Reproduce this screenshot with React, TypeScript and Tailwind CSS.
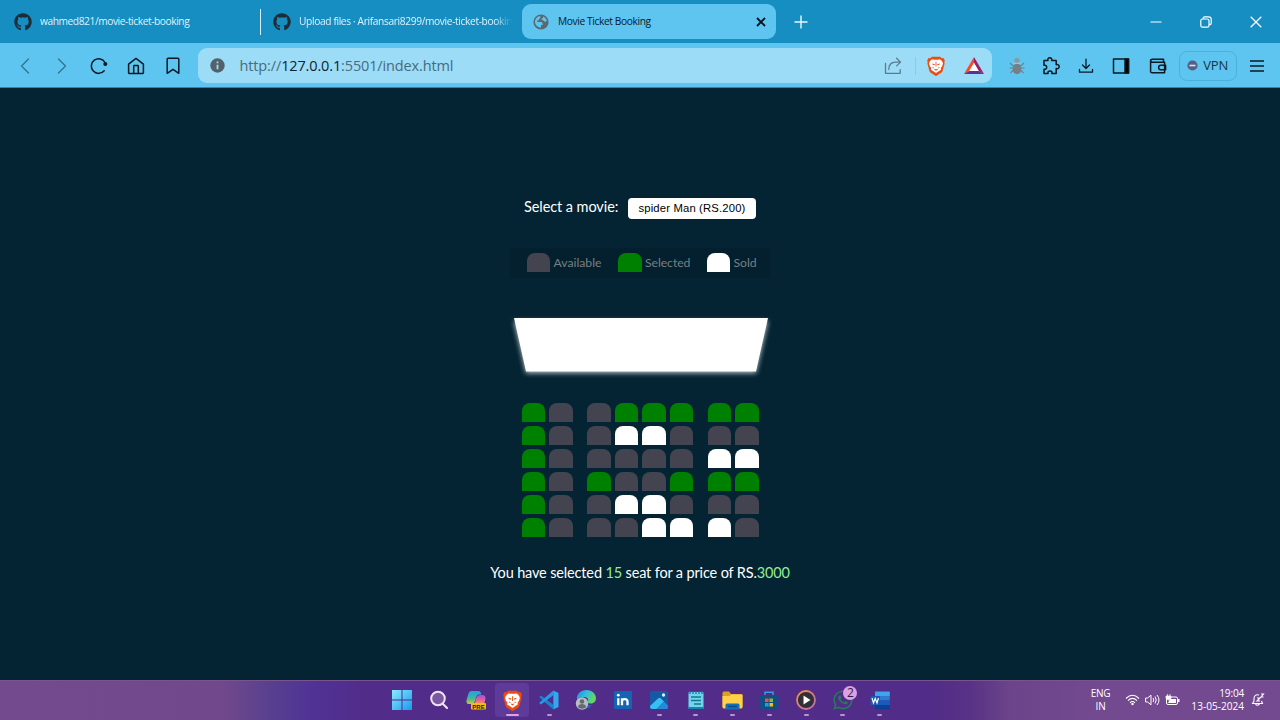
import React from "react";
import { FaGithub, FaWhatsapp } from "react-icons/fa";

type Seat = "a" | "s" | "x";

const seatColors: Record<Seat, string> = {
  a: "bg-[#444451]",
  s: "bg-[#008000]",
  x: "bg-white",
};

const rows = ["sa asss ss", "sa axxa aa", "sa aaaa xx", "sa saas ss", "sa axxa aa", "sa aaxx xa"];

function SeatBlock({ seats }: { seats: string }) {
  return (
    <div className="flex gap-[4px]">
      {seats.split("").map((s, i) => (
        <div key={i} className={`h-[19px] w-[23.5px] rounded-t-[8px] ${seatColors[s as Seat]}`} />
      ))}
    </div>
  );
}

function Brave({ size }: { size: number }) {
  return (
    <svg width={size} height={size} viewBox="0 0 24 24">
      <path d="M7 .8h10l1.800 1.800 2.200-.2 1.600 3-.7 2 .5 1.300-2.500 9.300c-.3 1-.8 1.600-1.600 2.200L12.800 23.800q-.8.500-1.600 0L5.700 20.200c-.8-.6-1.300-1.200-1.600-2.200L1.600 8.700l.5-1.300-.7-2 1.600-3 2.200.2z" fill="#ee4c12" />
      <path d="M7.500 3.900l2.500.5h4l2.500-.5 2 1.600 1.200 1.500.7 2-.9 3-1.700 2.500.3 2-2.400 1.400L12 20.500l-3.700-2.600-2.400-1.400.3-2L4.500 12l-.9-3 .7-2 1.200-1.500z" fill="#fff" />
      <path d="M7 8.900l3.600.9-.2 1.300-2.200-.5zM17 8.900l-3.600.9.2 1.300 2.200-.5zM11.500 7h1v5.500h-1zM9.700 15.400l2.300.6 2.300-.6-.8 1.300-1.500.9-1.500-.9zM7.800 13.200l2 .8-.4.8-1.400-.5zM16.200 13.200l-2 .8.4.8 1.400-.5z" fill="#ee4c12" />
    </svg>
  );
}

function TabBar() {
  return (
    <header className="flex h-[43px] items-center bg-[#168ec2] font-['Open_Sans',sans-serif] text-[10.2px] tracking-[-0.420px] text-[#dff3fc]">
      <div className="ml-[14px] flex w-[246px] items-center">
        <FaGithub size={18} color="#1d2d38" />
        <span className="ml-[8px] whitespace-nowrap">wahmed821/movie-ticket-booking</span>
      </div>
      <div className="h-[26px] w-px bg-[#d4effb]" />
      <div className="ml-[12px] flex w-[238px] items-center">
        <FaGithub size={18} color="#1d2d38" className="shrink-0" />
        <span className="ml-[8px] whitespace-nowrap tracking-[-0.360px] [mask-image:linear-gradient(to_right,black_92%,transparent)]">
          Upload files · Arifansari8299/movie-ticket-bookin
        </span>
      </div>
      <div className="ml-[11px] flex h-[35px] w-[254px] items-center rounded-[9px] bg-[#5ec4f0] pl-[11px] pr-[9px] text-[#06202d]">
        <svg width="16" height="16" viewBox="0 0 16 16">
          <circle cx="8" cy="8" r="7.600" fill="#5b686f" />
          <path d="M2 7.200C2.300 4.500 4.500 2.300 7.300 2v1.400c0 .9-.7 1.500-1.500 1.500v1.600H4.300v1.600h3.800c.8 0 1.500.7 1.500 1.500v1.500H8v2.500C5 13.700 2.500 11.500 2 8.600zM10 2.400c1.900.7 3.400 2.300 3.900 4.400-.8 1-2.100 1.300-2.900.5L9.800 6.100H8.600V4.700c.8 0 1.400-.6 1.400-1.400z" fill="#5ec4f0" />
        </svg>
        <span className="ml-[9px] tracking-[-0.380px]">Movie Ticket Booking</span>
        <svg className="ml-auto" width="12" height="12" viewBox="0 0 12 12">
          <path d="M2 2l8 8M10 2l-8 8" stroke="#03151e" strokeWidth="1.900" />
        </svg>
      </div>
      <svg className="ml-[18px]" width="14" height="14" viewBox="0 0 14 14">
        <path d="M7 .5v13M.5 7h13" stroke="#e9f8ff" strokeWidth="1.400" />
      </svg>
      <div className="ml-auto mr-[18px] flex items-center gap-[38px]">
        <svg width="12" height="12" viewBox="0 0 12 12"><path d="M.5 6h11" stroke="#fff" /></svg>
        <svg width="12" height="12" viewBox="0 0 12 12" fill="none" stroke="#fff" strokeWidth="1.200">
          <rect x=".8" y="3" width="8.200" height="8.200" rx="1.800" />
          <path d="M3.200 3V2c.1-.7.6-1.200 1.300-1.200h4.200c1.500 0 2.500 1 2.500 2.500v3.900c0 .8-.6 1.400-1.300 1.500H9" />
        </svg>
        <svg width="12" height="12" viewBox="0 0 12 12"><path d="M.7.7l10.600 10.600M11.300.7L.7 11.300" stroke="#fff" strokeWidth="1.300" /></svg>
      </div>
    </header>
  );
}

const line = { fill: "none", stroke: "#0a1a22", strokeWidth: 1.5, strokeLinecap: "round", strokeLinejoin: "round" } as const;

function Toolbar() {
  return (
    <div className="flex h-[45px] items-center border-b border-[#2f86ad] bg-[#5ec4f0] pt-px font-['Open_Sans',sans-serif]">
      <div className="ml-[16px] flex items-center gap-[18.900px]">
        <svg width="18" height="18" viewBox="0 0 18 18" {...line} stroke="#35748f" strokeWidth="1.300"><path d="M12.500 2L5.500 9l7 7" /></svg>
        <svg width="18" height="18" viewBox="0 0 18 18" {...line} stroke="#35748f" strokeWidth="1.300"><path d="M5.500 2l7 7-7 7" /></svg>
        <svg width="18" height="18" viewBox="0 0 18 18" {...line}>
          <path d="M14.200 13.800A7.300 7.300 0 1 1 15 5.500" /><circle cx="15.300" cy="7" r="2" fill="#0a1a22" stroke="none" />
        </svg>
        <svg width="18" height="18" viewBox="0 0 18 18" {...line}>
          <path d="M1.600 7.200L9 1.400l7.400 5.800v8.600c0 .4-.2.600-.6.600H2.200c-.4 0-.6-.2-.6-.6z" /><path d="M6.700 16V9.200c0-.4.2-.6.6-.6h3.400c.4 0 .6.200.6.600V16" />
        </svg>
        <svg width="18" height="18" viewBox="0 0 18 18" {...line}><path d="M3.200 2.200c0-.6.300-.9.900-.9h9.800c.6 0 .9.300.9.900v14.100L9 12.300l-5.800 4z" /></svg>
      </div>
      <div className="ml-[16px] flex h-[35px] w-[794.500px] items-center rounded-[9px] bg-[#9ddcf7] pl-[12px]">
        <svg width="15" height="15" viewBox="0 0 15 15"><circle cx="7.500" cy="7.500" r="7.200" fill="#54616b" /><path d="M7.500 6.700v4.600M7.500 3.500v1.700" stroke="#9ddcf7" strokeWidth="1.800" /></svg>
        <span className="ml-[15px] text-[14.500px] tracking-[-0.140px] text-[#466b7d]">http://<span className="text-[#10242e]">127.0.0.1</span>:5501/index.html</span>
        <svg className="ml-auto" width="18" height="18" viewBox="0 0 18 18" {...line} stroke="#587d8e" strokeWidth="1.300">
          <path d="M1.500 6.500v9.800h14.700v-3.600M4.800 12.600c0-4.500 2.500-7.500 6.800-7.500h4.800M12.600 1.300l3.900 3.800-3.900 3.800" />
        </svg>
        <div className="ml-[13px] h-[18px] w-px bg-[#8dcbe5]" />
        <div className="ml-[10px]"><Brave size={20} /></div>
        <svg className="ml-[18px] mr-[8.500px]" width="20" height="18" viewBox="0 0 20 18">
          <path d="M10 0L0 17l5.500-3L10 6z" fill="#ff4724" /><path d="M10 0l10 17-5.500-3L10 6z" fill="#9e1f63" /><path d="M0 17h20l-5.500-3h-9z" fill="#5a3294" /><path d="M10 5.700L5.200 14h9.600z" fill="#fff" />
        </svg>
      </div>
      <div className="ml-[16.600px] flex items-center">
        <svg width="16" height="18" viewBox="0 0 16 18">
          <path d="M1 6l2.500 2.500h9L15 6M.5 11h15M1.500 16l3-3M14.500 16l-3-3" fill="none" stroke="#6f818a" strokeWidth="1.100" />
          <ellipse cx="8" cy="11.800" rx="4.400" ry="5.400" fill="#747f86" /><rect x="5.300" y="1" width="5.400" height="4.800" rx="2" fill="#8b999f" /><path d="M4.500 6.300h7" stroke="#b4c1c7" />
        </svg>
        <svg className="ml-[17.600px]" width="18" height="18" viewBox="0 0 18 18" {...line}>
          <path d="M2 3.600h4c-.7-1.600.3-2.900 1.800-2.900s2.500 1.300 1.800 2.900h4.600v4.100c1.600-.7 3 .3 3 1.900s-1.400 2.500-3 1.800v5H9.800c.6-1.500-.5-2.500-1.800-2.500s-2.500 1-1.900 2.500H2v-4.200c1.700.5 2.700-.5 2.700-1.900S3.700 7.800 2 8.300z" />
        </svg>
        <svg className="ml-[18px]" width="16" height="16" viewBox="0 0 16 16" {...line} strokeWidth="1.300"><path d="M8 1.200v9M4.500 7L8 10.500 11.500 7M1.500 11.500v2.700h13v-2.700" /></svg>
        <svg className="ml-[18px]" width="18" height="18" viewBox="0 0 18 18" {...line}><rect x="1.500" y="2" width="15" height="14" /><path d="M13 2h3.500v14H13z" fill="#000" /></svg>
        <svg className="ml-[19px]" width="18" height="18" viewBox="0 0 18 18" {...line}>
          <path d="M14.500 5V2.200H3.600c-1.300 0-2 .6-2 1.500s.7 1.600 2 1.600h12v10.500H3c-.9 0-1.400-.5-1.400-1.400V3.900M16.600 8.200h-4.800c-2.900 0-2.900 4.600 0 4.600h4.800z" />
        </svg>
        <div className="ml-[12px] flex h-[30px] w-[58px] items-center rounded-[8px] border border-[#4ab0dc] pl-[7px]">
          <svg width="11" height="11" viewBox="0 0 11 11"><circle cx="5.500" cy="5.500" r="5.100" fill="#575f85" /><path d="M2.500 5.500h6" stroke="#d7e6ef" strokeWidth="1.600" /></svg>
          <span className="ml-[5px] text-[13px] tracking-[-0.200px] text-[#173645]">VPN</span>
        </div>
        <svg className="ml-[12px]" width="16" height="14" viewBox="0 0 16 14"><path d="M1 2h14M1 7h14M1 12h14" stroke="#0a1a22" strokeWidth="1.500" /></svg>
      </div>
    </div>
  );
}

function Page() {
  return (
    <main className="flex h-[592px] flex-col items-center bg-[#042433] pt-[110px] font-[Lato,sans-serif] text-white">
      <div className="flex h-[21px] w-[232px] items-center justify-between">
        <label className="whitespace-nowrap pb-[2px] text-[14.500px] leading-none tracking-[-0.080px]">Select a movie:</label>
        <div className="flex h-[21px] w-[128px] items-center justify-center rounded-[4px] bg-white font-['Liberation_Sans',sans-serif] text-[11.300px] tracking-[0.150px] text-black">
          spider Man (RS.200)
        </div>
      </div>
      <ul className="mt-[29px] flex h-[30px] w-[260px] items-center bg-[#04202e] pb-px pl-[17px] text-[12.200px] text-[#777f83]">
        <li className="flex w-[91px] items-center gap-[3.500px]"><div className="h-[19px] w-[23px] rounded-t-[8px] bg-[#444451]" /><span className="pt-px leading-[18px]">Available</span></li>
        <li className="flex w-[89px] items-center gap-[3px]"><div className="h-[19px] w-[24px] rounded-t-[8px] bg-[#008000]" /><span className="pt-px leading-[18px] tracking-[-0.050px]">Selected</span></li>
        <li className="flex items-center gap-[3.500px]"><div className="h-[19px] w-[23px] rounded-t-[8px] bg-white" /><span className="pt-px leading-[18px]">Sold</span></li>
      </ul>
      <svg className="mt-[30px]" width="280" height="74" viewBox="0 0 280 74">
        <defs><filter id="glow" x="-10%" y="-30%" width="120%" height="160%"><feGaussianBlur stdDeviation="2.400" /></filter></defs>
        <path d="M14 13h254l-12 52H26z" fill="#fff" opacity=".75" filter="url(#glow)" />
        <path d="M14 10h254l-12 53.500H26z" fill="#fff" />
      </svg>
      <div className="mt-[21px] flex w-[237px] flex-col gap-[4px]">
        {rows.map((row, i) => (
          <div key={i} className="flex justify-between">
            {row.split(" ").map((block, j) => <SeatBlock key={j} seats={block} />)}
          </div>
        ))}
      </div>
      <p className="mt-[26px] whitespace-nowrap text-[14.500px] leading-[20px] tracking-[-0.150px]">
        You have selected <span className="text-[#90ee90]">15</span> seat for a price of RS.<span className="text-[#90ee90]">3000</span>
      </p>
    </main>
  );
}

function AppIcon({ children, active, dot = true }: { children: React.ReactNode; active?: boolean; dot?: boolean }) {
  return (
    <div className={`relative flex h-[34px] w-[34px] items-center justify-center rounded-[4px] ${active ? "bg-[#5f3b99]" : ""}`}>
      {children}
      {dot && <i className={`absolute bottom-[1px] h-[2.500px] rounded-full ${active ? "w-[13px] bg-[#df9ee7]" : "w-[5px] bg-[#b597ce]"}`} />}
    </div>
  );
}

function Taskbar() {
  return (
    <footer className="flex h-[40px] items-center border-t border-[#765591] bg-[linear-gradient(to_right,#734a8d_0,#70488b_225px,#58408f_270px,#503395_310px,#512c88_370px,#512c88_930px,#583286_970px,#6b448a_1010px,#734a8f_1100px)] pb-px font-['Open_Sans',sans-serif] text-white">
      <div className="ml-[385.200px] flex gap-[2.720px]">
        <AppIcon dot={false}><svg width="20" height="20" viewBox="0 0 20 20"><defs><linearGradient id="win" x2="1" y2="1"><stop stopColor="#8ceaff" /><stop offset="1" stopColor="#169bed" /></linearGradient></defs><path d="M0 0h9.500v9.500H0zM10.500 0H20v9.500h-9.500zM0 10.500h9.500V20H0zM10.500 10.500H20V20h-9.500z" fill="url(#win)" /></svg></AppIcon>
        <AppIcon dot={false}><svg width="20" height="20" viewBox="0 0 20 20"><circle cx="9" cy="8.500" r="6.800" fill="#79589f" stroke="#eee2f4" strokeWidth="2" /><path d="M14 14l4 4" stroke="#eee2f4" strokeWidth="2.200" strokeLinecap="round" /></svg></AppIcon>
        <AppIcon dot={false}>
          <svg width="20" height="20" viewBox="0 0 20 20">
            <defs><linearGradient id="cpl" x2="0" y2="1"><stop stopColor="#269ee6" /><stop offset=".6" stopColor="#41b996" /><stop offset="1" stopColor="#dbc827" /></linearGradient><linearGradient id="cpr" x2="0" y2="1"><stop stopColor="#9854dd" /><stop offset=".5" stopColor="#e65d98" /><stop offset="1" stopColor="#f29b57" /></linearGradient></defs>
            <path d="M5.500 1h7c2 0 2.300 1.500 2.800 3.500H13c-2 0-2.500 2-3.300 4.500-.9 3-1.700 5-3.700 5H3c-2.300 0-3-2-2.300-4.500l1.800-6C3 2 3.800 1 5.500 1z" fill="url(#cpl)" /><path d="M14 5h2c3 0 4 2 3.300 4.500L18 14h-8c-1.500 0-1-1.500-.5-3 .8-3 1.500-6 4.500-6z" fill="url(#cpr)" />
            <rect x="5" y="13" width="15" height="6.500" rx="1" fill="#f7ba19" /><text x="6.200" y="18.600" fontSize="6" letterSpacing=".1" fontWeight="900" fontFamily="Liberation Sans" fill="#2b1c08">PRE</text>
          </svg>
        </AppIcon>
        <AppIcon active><Brave size={21} /></AppIcon>
        <AppIcon>
          <svg width="20" height="20" viewBox="0 0 20 20">
            <path d="M14.300.6L19.500 3v14l-5.200 2.500z" fill="#36a7ee" />
            <path d="M.4 6.800L2 5.400l12.300 9.400v4.700L.5 7.600z" fill="#1684cb" />
            <path d="M.4 13.200L2 14.600 14.300 5.200V.6L.5 12.400z" fill="#239be4" />
          </svg>
        </AppIcon>
        <AppIcon dot={false}>
          <svg width="22" height="20" viewBox="0 0 22 20"><defs><linearGradient id="edge" x2="1" y2=".4"><stop stopColor="#248bdc" /><stop offset=".55" stopColor="#37c0d8" /><stop offset="1" stopColor="#65d65c" /></linearGradient></defs>
            <path d="M2 10C1 4 6 0 11.500 0 17 0 21 4 21 8.500c0 3-2.500 5-5.500 5-2 0-3-.7-2.500-2 .8-2.500-1-4.500-4-4.500C6 7 3 8 2 10z" fill="url(#edge)" /><path d="M2 10c1-3 6-4 9-1 0 5 2 7 6 6-2 4-8 5-12 2C2 15 1 13 2 10z" fill="#1767ba" />
            <circle cx="7" cy="13.500" r="6.200" fill="#b8bdc2" /><circle cx="7" cy="11.500" r="2.300" fill="#646a73" /><path d="M3 17c0-4 8-4 8 0-2 2.300-6 2.300-8 0z" fill="#646a73" />
          </svg>
        </AppIcon>
        <AppIcon dot={false}><svg width="18" height="18" viewBox="0 0 18 18"><rect width="18" height="18" rx="1" fill="#1464b4" /><path d="M4.300 7.200v7M8 14.200v-7M8 10c.2-2.200 5.500-3 5.500.5v3.700" fill="none" stroke="#fff" strokeWidth="2.300" /><circle cx="4.300" cy="4.200" r="1.400" fill="#fff" /></svg></AppIcon>
        <AppIcon><svg width="18" height="18" viewBox="0 0 18 18"><rect width="18" height="18" rx="2" fill="#1558a4" /><path d="M0 15L8 7.500c1-1 2-1 3 0l3 3L6.500 18H2c-1.500 0-2-1-2-3z" fill="#38bff2" /><path d="M14 10.500l4 4.300V16c0 1.500-.5 2-2 2H6.500z" fill="#258ad7" /><circle cx="13.500" cy="4" r="1.700" fill="#d8edff" /></svg></AppIcon>
        <AppIcon><svg width="16" height="20" viewBox="0 0 16 20"><rect x=".5" y="2" width="15" height="17" rx="1" fill="#70d4ed" /><path d="M.5 17h15v2H.5z" fill="#1585aa" /><path d="M2 1v3M5 1v3M8 1v3M11 1v3M14 1v3" stroke="#197e9f" strokeWidth="1.300" /><path d="M3 7h10M3 10.500h10M6 14h7" stroke="#187590" strokeWidth="1.300" /></svg></AppIcon>
        <AppIcon><svg width="21" height="19" viewBox="0 0 21 19"><path d="M.5 2q0-1.500 1.500-1.500h5L9 3h10q1.500 0 1.500 1.500V16H.5z" fill="#dca21c" /><path d="M.5 5h7L9 3.500h11.500V16q0 1.500-1.500 1.500H2Q.5 17.500.5 16z" fill="#ffd04b" /><path d="M3.500 18.500V14q0-1.500 1.500-1.500h11q1.500 0 1.500 1.500v4.500z" fill="#176eb8" /><path d="M6 15.500h9" stroke="#0b4e89" strokeWidth="1.500" /></svg></AppIcon>
        <AppIcon><svg width="20" height="19" viewBox="0 0 20 19"><path d="M6 5V1.300h8V5" fill="none" stroke="#389cdd" strokeWidth="1.500" /><path d="M.5 4h19v12q0 2.500-2.500 2.500H3Q.5 18.500.5 16z" fill="#134d84" /><path d="M6 7.500h3.600V11H6z" fill="#f35325" /><path d="M10.500 7.500H14V11h-3.500z" fill="#81bc35" /><path d="M6 12h3.600v3.500H6z" fill="#12a4e9" /><path d="M10.500 12H14v3.500h-3.500z" fill="#ffba08" /></svg></AppIcon>
        <AppIcon><svg width="20" height="20" viewBox="0 0 20 20"><defs><linearGradient id="media" x2="1" y2="1"><stop stopColor="#f6923e" /><stop offset="1" stopColor="#b66dbb" /></linearGradient></defs><circle cx="10" cy="10" r="9" fill="#303039" stroke="url(#media)" strokeWidth="1.800" /><path d="M7.500 5.500v9l7-4.500z" fill="#fff" /></svg></AppIcon>
        <AppIcon><FaWhatsapp size={22} color="#237b57" /><span className="absolute left-[17.500px] top-[3px] flex h-[14px] w-[14px] items-center justify-center rounded-full bg-[#dda0e5] text-[12px] text-[#32203f]">2</span></AppIcon>
        <AppIcon><svg width="20" height="19" viewBox="0 0 20 19"><path d="M5 .5h14q.8 0 .8.800V5H5z" fill="#41a5ee" /><path d="M5 5h14.800v4.500H5z" fill="#2b7cd3" /><path d="M5 9.500h14.800V14H5z" fill="#185abd" /><path d="M5 14h14.800v3.500q0 1-.8 1H6q-1 0-1-1z" fill="#103f91" /><rect x=".5" y="5" width="9.500" height="9" rx=".8" fill="#175bb7" /><path d="M2 7l1.500 5L5.200 7.500 7 12l1.500-5" fill="none" stroke="#fff" strokeWidth="1.200" /></svg></AppIcon>
      </div>
      <div className="ml-[193px] w-[22px] text-center text-[10px] leading-[13px] tracking-[-0.200px]">ENG<br />IN</div>
      <div className="ml-[13.500px] flex items-center gap-[5px]">
        <svg width="15" height="12" viewBox="0 0 15 12" fill="none" stroke="#fff" strokeWidth="1.100"><path d="M1 4.500Q7.500-2 14 4.500M3 6.700q4.500-4.500 9 0M5 8.800q2.500-2.500 5 0" /><circle cx="7.500" cy="10" r="1.200" fill="#fff" stroke="none" /></svg>
        <svg width="15" height="12" viewBox="0 0 15 12" fill="none" stroke="#fff" strokeWidth="1"><path d="M.6 4v4h2L6 10.800V1.200L2.600 4zM8 4q1.500 2 0 4M10 2.500q2.500 3.500 0 7M12 1q4 5 0 10" /></svg>
        <svg width="15" height="12" viewBox="0 0 15 12"><rect x="1.500" y="3" width="11" height="7.500" rx="1.500" fill="none" stroke="#fff" /><path d="M5 5h6v4H3zM13 5h1.500v3H13z" fill="#fff" /><path d="M2.500 0v2M5 0v2M1 2h5v2.500L3.500 6 1 4.500z" fill="#fff" stroke="#fff" strokeWidth=".7" /></svg>
      </div>
      <div className="ml-[8px] w-[56px] whitespace-nowrap text-right text-[10.100px] leading-[13px]"><span className="tracking-[-0.200px]">19:04</span><br />13-05-2024</div>
      <svg className="ml-[6.500px]" width="14" height="14" viewBox="0 0 14 14" fill="none" stroke="#fff" strokeWidth="1.100"><path d="M8 2C5 1 3 3 3 5.500V8L1.500 10.500h10L10.500 8M4.500 11q1.500 2.500 4 0M6 5h3L6 8h3M10 1h2.500L10 4h2.500" /></svg>
    </footer>
  );
}

export default function App() {
  return (
    <div className="flex h-[720px] w-[1280px] flex-col overflow-hidden">
      <TabBar />
      <Toolbar />
      <Page />
      <Taskbar />
    </div>
  );
}
